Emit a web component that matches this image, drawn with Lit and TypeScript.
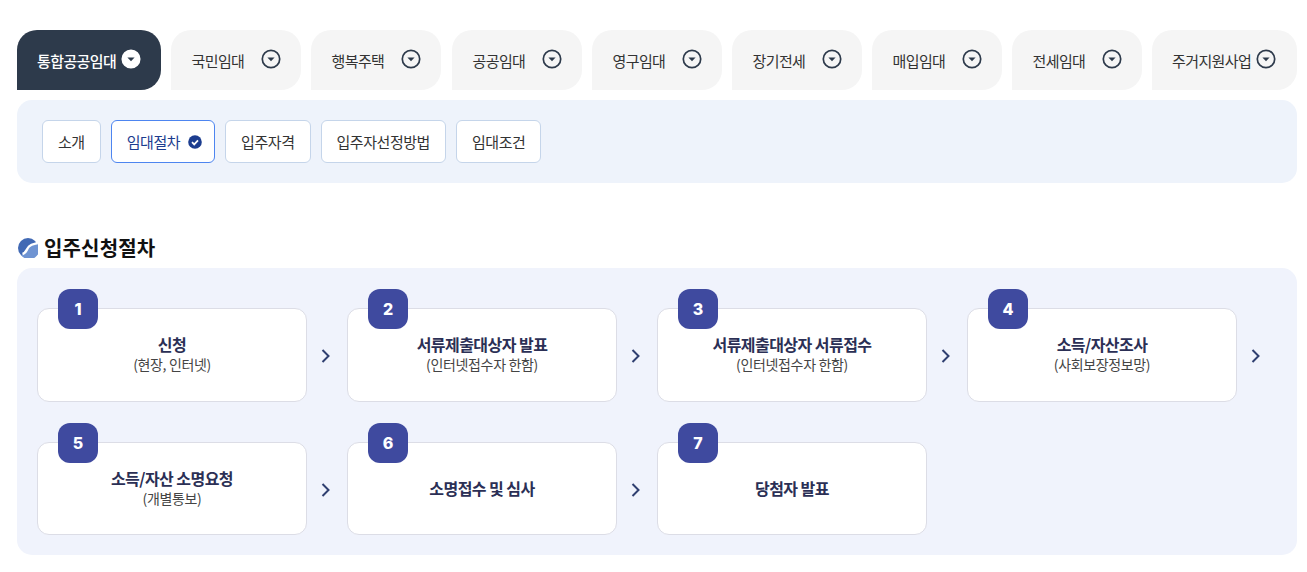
import { LitElement, html, css, svg } from 'lit';
import { customElement } from 'lit/decorators.js';

const tabs = ['국민임대', '행복주택', '공공임대', '영구임대', '장기전세', '매입임대', '전세임대', '주거지원사업'];
const subTabs = ['소개', '임대절차', '입주자격', '입주자선정방법', '임대조건'];
const steps = [
  { title: '신청', sub: '(현장, 인터넷)' },
  { title: '서류제출대상자 발표', sub: '(인터넷접수자 한함)' },
  { title: '서류제출대상자 서류접수', sub: '(인터넷접수자 한함)' },
  { title: '소득/자산조사', sub: '(사회보장정보망)' },
  { title: '소득/자산 소명요청', sub: '(개별통보)' },
  { title: '소명접수 및 심사', sub: '' },
  { title: '당첨자 발표', sub: '' },
];

const caretIcon = svg`<svg class="caret" width="20" height="20" viewBox="0 0 20 20">
  <circle class="caret-ring" cx="10" cy="10" r="8.7" stroke-width="1.7"></circle>
  <path class="caret-tip" d="M6.4 8.4h7.2L10 12.3z"></path>
</svg>`;

@customElement('app-root')
export class AppRoot extends LitElement {
  static styles = css`
    :host {
      display: block;
      padding: 30px 10px 17px 17px;
      font-family: "Noto Sans CJK KR", "Noto Sans", sans-serif;
      color: #333;
      background: #fff;
    }
    * {
      box-sizing: border-box;
    }
    .tabs {
      display: flex;
      gap: 10px;
      width: 1280px;
    }
    .tab {
      flex: 0 0 130px;
      height: 60px;
      display: flex;
      align-items: center;
      gap: 5px;
      padding: 0 0 0 20.5px;
      background: #f5f5f5;
      border-radius: 20px 20px 20px 0;
      font-size: 15px;
      letter-spacing: -0.6px;
      color: #333;
    }
    .tab span {
      min-width: 64.5px;
    }
    .tab.wide {
      flex-basis: 145px;
      padding-left: 20px;
    }
    .tab.active {
      flex-basis: 144px;
      padding-left: 20px;
      background: #2d3a4b;
      color: #fff;
      font-weight: 500;
    }
    .tab:nth-child(4) {
      margin-left: 1px;
    }
    .caret {
      display: block;
      flex: none;
      margin-top: -2px;
    }
    .caret-ring {
      fill: none;
      stroke: #2d3a4b;
    }
    .caret-tip {
      fill: #2d3a4b;
    }
    .active .caret-ring {
      fill: #fff;
      stroke: #fff;
    }
    .sub-panel {
      margin-top: 10px;
      width: 1280px;
      height: 83px;
      padding: 20px 25px;
      display: flex;
      gap: 10px;
      background: #eef3fb;
      border-radius: 15px;
    }
    .sub-tab {
      height: 43px;
      padding: 0 15px;
      display: flex;
      align-items: center;
      gap: 8px;
      background: #fff;
      border: 1px solid #c5d5ea;
      border-radius: 6px;
      font-size: 15px;
      letter-spacing: -0.45px;
      color: #333;
    }
    .sub-tab.active {
      padding-right: 12px;
      border-color: #4d85f0;
      color: #1c3d8f;
    }
    .check {
      display: block;
    }
    .heading {
      margin: 48px 0 4px;
      height: 33px;
      display: flex;
      align-items: center;
      gap: 6px;
      padding-left: 1px;
      font-size: 20px;
      font-weight: 700;
      letter-spacing: 0.15px;
      color: #111;
    }
    .steps {
      width: 1280px;
      height: 287px;
      padding: 40px 20px 20px;
      display: grid;
      grid-template-columns: repeat(4, 270px);
      grid-template-rows: 94px 93px;
      column-gap: 40px;
      row-gap: 40px;
      background: #f0f3fc;
      border-radius: 15px;
    }
    .step {
      position: relative;
      display: flex;
      flex-direction: column;
      align-items: center;
      justify-content: center;
      background: #fff;
      border: 1px solid #dcdde6;
      border-radius: 12px;
      padding-bottom: 2px;
    }
    .num {
      position: absolute;
      left: 20px;
      top: -20px;
      width: 40px;
      height: 40px;
      display: flex;
      align-items: center;
      justify-content: center;
      background: #3f4a9f;
      border-radius: 12px;
      color: #fff;
      font-family: Inter, "Liberation Sans", sans-serif;
      font-size: 16px;
      font-weight: 800;
    }
    .title {
      font-size: 16px;
      font-weight: 600;
      line-height: 20px;
      letter-spacing: -0.55px;
      color: #2b2f55;
    }
    .sub {
      font-size: 14px;
      line-height: 20px;
      letter-spacing: -0.35px;
      color: #444;
    }
    .arrow {
      position: absolute;
      right: -26px;
      top: 50%;
      margin-top: -6px;
      display: block;
    }
  `;

  render() {
    return html`
      <div class="tabs">
        <div class="tab active"><span>통합공공임대</span>${caretIcon}</div>
        ${tabs.map(
          (t) => html`<div class="tab ${t.length > 4 ? 'wide' : ''}"><span>${t}</span>${caretIcon}</div>`
        )}
      </div>
      <div class="sub-panel">
        ${subTabs.map(
          (t) => html`<div class="sub-tab ${t === '임대절차' ? 'active' : ''}">
            <span>${t}</span>
            ${t === '임대절차'
              ? html`<svg class="check" width="14" height="14" viewBox="0 0 14 14">
                  <circle cx="7" cy="7" r="6.8" fill="#1c3d8f"></circle>
                  <path d="M4 7.2l2.2 2.2L10 5.3" fill="none" stroke="#fff" stroke-width="1.7"></path>
                </svg>`
              : ''}
          </div>`
        )}
      </div>
      <h2 class="heading">
        <svg width="20" height="20" viewBox="0 0 20 20">
          <circle cx="10" cy="10" r="10" fill="#4169b4"></circle>
          <path d="M3 17C8 16 8 11 11 8.5S16 6 19.5 5A10 10 0 0 1 3 17z" fill="#6f94d2"></path>
          <path d="M4.5 16C8.5 15 8.5 11 11 8.5S16 6 19.8 5" fill="none" stroke="#fff" stroke-width="2.4"></path>
        </svg>
        <span>입주신청절차</span>
      </h2>
      <div class="steps">
        ${steps.map(
          (s, i) => html`<div class="step">
            <div class="num">${i + 1}</div>
            <div class="title">${s.title}</div>
            ${s.sub ? html`<div class="sub">${s.sub}</div>` : ''}
            ${i < 6
              ? html`<svg class="arrow" width="12" height="14" viewBox="0 0 12 14">
                  <path d="M2.5 1l6 6-6 6" fill="none" stroke="#2f3f70" stroke-width="2"></path>
                </svg>`
              : ''}
          </div>`
        )}
      </div>
    `;
  }
}
